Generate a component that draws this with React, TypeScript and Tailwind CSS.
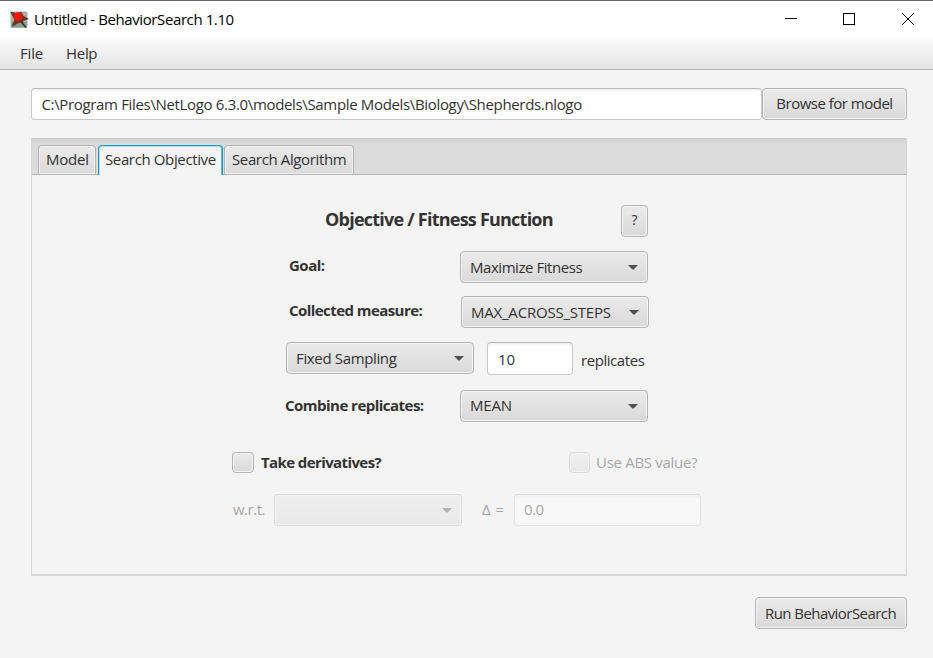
import type { ReactNode } from 'react';

const face =
  'border border-[#b5b5b5] bg-linear-to-b from-[#ebebeb] to-[#d9d9d9] shadow-[inset_0_0_0_1px_#f3f3f3] rounded-[4px]';

function Button({ className, children }: { className: string; children: ReactNode }) {
  return (
    <button className={`${face} flex h-8 shrink-0 justify-center whitespace-nowrap leading-5 ${className}`}>
      {children}
    </button>
  );
}

function Combo({ className, children }: { className: string; children?: ReactNode }) {
  return (
    <div className={`${face} flex h-8 w-[188px] shrink-0 items-center justify-between px-[9px]`}>
      <span className={`h-5 whitespace-nowrap leading-5 ${className}`}>{children}</span>
      <svg className="mt-px h-[5px] w-[10px] shrink-0" viewBox="0 0 10 5">
        <path d="M0 0H10L5.6 4.6H4.4Z" fill="#505050" />
      </svg>
    </div>
  );
}

const field =
  'shrink-0 rounded-[4px] border border-[#c8c8c8] border-t-[#b9b9b9] bg-white bg-linear-to-b from-[#f0f0f0] to-white to-[4px] pl-[9px] leading-5 whitespace-nowrap';

function Tab({ className, children }: { className: string; children: ReactNode }) {
  return (
    <div className={`shrink-0 whitespace-nowrap rounded-t-[4px] leading-5 ${className}`}>{children}</div>
  );
}

const idleTab =
  'h-[29px] border border-b-0 border-[#b5b5b5] bg-linear-to-b from-[#ebebeb] to-[#dadada] pt-[3px] shadow-[inset_0_0_0_1px_#f0f0f0]';

const boldLabel = 'shrink-0 whitespace-nowrap font-bold leading-5 text-[#333]';

export default function App() {
  return (
    <div className="flex h-[658px] w-[933px] flex-col overflow-hidden bg-[#f4f4f4] font-['Open_Sans','Noto_Sans',sans-serif] text-[15px] text-[#333]">
      <header className="flex h-[38px] shrink-0 border-t border-[#696769] bg-white pl-[10px] text-black">
        <svg className="mt-[9px] h-[19px] w-[20px] shrink-0" viewBox="0 0 20 19">
          <rect x="0.500" y="1.500" width="17" height="16.500" rx="1.500" fill="#a3b3ab" />
          <rect x="1.500" y="12" width="15" height="5" fill="#8c9a86" />
          <path d="M0 1.500L6 3L11.500 2L13.500 6L19 9L13 11L13.500 13L9.500 12.500L1.500 17L4.500 9.500Z" fill="#6d302b" />
          <path d="M10 10.500L16 17.500" stroke="#26302a" strokeWidth="1.300" />
          <circle cx="8" cy="6.800" r="4.500" fill="#fb1400" />
        </svg>
        <span className="ml-1 mt-2 whitespace-nowrap leading-5 tracking-[-0.4px]">Untitled - BehaviorSearch 1.10</span>
        <svg className="ml-auto mr-[18px] mt-[11px] h-[14px] w-[131px] shrink-0" viewBox="0 0 131 14" fill="none" stroke="#000">
          <path d="M1 6.500H13" />
          <rect x="59.500" y="1.500" width="11" height="11" />
          <path d="M118 1L130 13M130 1L118 13" />
        </svg>
      </header>

      <nav className="flex h-8 shrink-0 border-b border-[#b5b5b5] bg-linear-to-b from-[#fcfcfc] to-[#e3e3e3] pl-5 pt-[5px] leading-5">
        <span className="w-[46px] tracking-[-0.2px]">File</span>
        <span className="tracking-[-0.3px]">Help</span>
      </nav>

      <div className="ml-[31px] mt-[18px] flex h-8 shrink-0">
        <div className={`${field} h-8 w-[731px] pt-[5px] tracking-[-0.34px]`}>
          <span className="ml-[0.5px]">C:\Program Files\NetLogo 6.3.0\models\Sample Models\Biology\Shepherds.nlogo</span>
        </div>
        <Button className="w-[145px] pt-1 tracking-[-0.5px]">Browse for model</Button>
      </div>

      <section className="ml-[31px] mt-[18px] flex h-[438px] w-[876px] shrink-0 flex-col border border-b-2 border-t-0 border-[#d6d6d6]">
        <div className="flex h-[37px] shrink-0 border-b border-t border-b-[#b5b5b5] border-t-[#c8c8c8] bg-linear-to-b from-[#d0d0d0] to-[#dcdcdc] to-[6px] pl-[6px] pt-[6px]">
          <Tab className={`${idleTab} w-[58px] pl-[7px] tracking-[-0.2px]`}>Model</Tab>
          <Tab className="ml-[2px] h-[30px] w-[125px] border border-b-0 border-[#0f9bc9] bg-[#f4f4f4] pl-[6px] pt-[3px] tracking-[-0.37px] shadow-[inset_1px_1px_0_#b5dbe8,inset_-1px_0_0_#62b9d6]">
            Search Objective
          </Tab>
          <Tab className={`${idleTab} ml-px w-[130px] pl-[7px] tracking-[-0.37px]`}>Search Algorithm</Tab>
        </div>

        <div className="mt-[30px] flex h-8 shrink-0 pl-[293px]">
          <h1 className="mt-[2px] w-[296px] whitespace-nowrap text-[18px] font-bold leading-6 tracking-[-0.77px] text-[#333]">
            Objective / Fitness Function
          </h1>
          <Button className="w-[27px] pt-1 text-[14px]">?</Button>
        </div>

        <div className="mt-[14px] flex h-8 shrink-0 pl-[257px]">
          <span className={`${boldLabel} mt-1 w-[171px] tracking-[-0.5px]`}>Goal:</span>
          <Combo className="tracking-[-0.45px]">Maximize Fitness</Combo>
        </div>

        <div className="mt-[13px] flex h-8 shrink-0 pl-[257px]">
          <span className={`${boldLabel} mt-1 w-[172px] tracking-[-0.56px]`}>Collected measure:</span>
          <Combo className="tracking-[-0.21px]">MAX_ACROSS_STEPS</Combo>
        </div>

        <div className="mt-[14px] flex h-[33px] shrink-0 pl-[254px]">
          <Combo className="tracking-[-0.35px]">Fixed Sampling</Combo>
          <div className={`${field} ml-[13px] h-[33px] w-[86px] pl-[10px] pt-[6px] tracking-[-0.1px]`}>10</div>
          <span className="ml-[8px] mt-2 leading-5 tracking-[-0.44px]">replicates</span>
        </div>

        <div className="mt-[15px] flex h-8 shrink-0 pl-[253px]">
          <span className={`${boldLabel} mt-[5px] w-[175px] tracking-[-0.52px]`}>Combine replicates:</span>
          <Combo className="mb-[2px] tracking-[-0.2px]">MEAN</Combo>
        </div>

        <div className="mt-[30px] flex h-[21px] shrink-0 pl-[200px]">
          <div className={`${face} h-[21px] w-[22px]`} />
          <span className={`${boldLabel} ml-[7px] w-[308px] tracking-[-0.6px]`}>Take derivatives?</span>
          <div className="flex opacity-40">
            <div className={`${face} h-[21px] w-[21px]`} />
            <span className="ml-[6px] whitespace-nowrap leading-5 tracking-[-0.3px]">Use ABS value?</span>
          </div>
        </div>

        <div className="mt-[21px] flex h-8 shrink-0 pl-[201px] opacity-40">
          <span className="mt-[5px] w-[41px] leading-5 tracking-[-0.5px]">w.r.t.</span>
          <Combo className="" />
          <span className="ml-5 mt-[5px] w-8 whitespace-nowrap leading-5 tracking-[0.5px]">Δ =</span>
          <div className={`${field} h-8 w-[187px] pt-1 tracking-[-0.5px]`}>0.0</div>
        </div>
      </section>

      <Button className="ml-[755px] mt-[21px] w-[152px] pr-px pt-[5px] tracking-[-0.56px]">Run BehaviorSearch</Button>
    </div>
  );
}
